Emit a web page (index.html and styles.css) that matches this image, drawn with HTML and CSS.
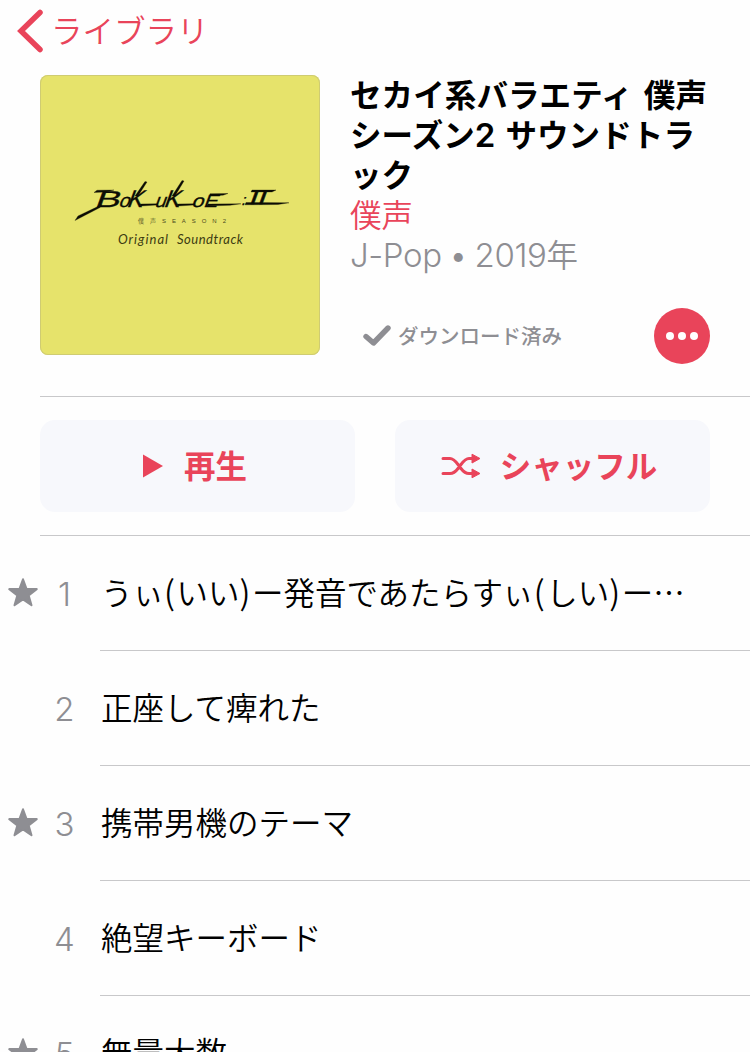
FILE: index.html
```html
<!DOCTYPE html>
<html lang="ja">
<head>
    <meta charset="UTF-8">
    <meta name="viewport" content="width=device-width, initial-scale=1.0">
    <title>ライブラリ</title>
    <link rel="stylesheet" href="styles.css">
</head>
<body>
    <header class="navbar">
        <a href="#" class="back">
            <svg class="back-icon" width="26" height="44" viewBox="0 0 26 44">
                <path d="M23 3.500 4 22 23 40.500" fill="none" stroke="currentColor" stroke-width="5.500" stroke-linecap="round" stroke-linejoin="miter"/>
            </svg>
            <span>ライブラリ</span>
        </a>
    </header>

    <section class="album">
        <div class="cover">
            <svg width="280" height="280" viewBox="0 0 280 280">
                <!-- brush logo -->
                <g class="logo">
                    <text transform="translate(54 132) skewX(-20)" font-size="23" textLength="25" lengthAdjust="spacingAndGlyphs">B</text>
                    <text transform="translate(78 132) skewX(-20)" font-size="19" textLength="11" lengthAdjust="spacingAndGlyphs">o</text>
                    <text transform="translate(86 132) skewX(-20)" font-size="24" textLength="16" lengthAdjust="spacingAndGlyphs">K</text>
                    <text transform="translate(114 131.500) skewX(-20)" font-size="19" textLength="11" lengthAdjust="spacingAndGlyphs">u</text>
                    <text transform="translate(123 132) skewX(-20)" font-size="24" textLength="16" lengthAdjust="spacingAndGlyphs">K</text>
                    <text transform="translate(151 132) skewX(-20)" font-size="18" textLength="12" lengthAdjust="spacingAndGlyphs">o</text>
                    <text transform="translate(163 131.500) skewX(-20)" font-size="18" textLength="14" lengthAdjust="spacingAndGlyphs">E</text>
                    <text transform="translate(201 129.500) skewX(-16)" font-size="15">:</text>
                    <text transform="translate(208 129) skewX(-20)" font-size="18" textLength="17" lengthAdjust="spacingAndGlyphs">II</text>
                    <!-- strokes running out of the letters -->
                    <path d="M35 145.500 38 141 62 129.500 60 132.500z"/>
                    <path d="M54 117.500 57 115.200 74 115 66 117z"/>
                    <path d="M95 121 105 106.500 107 107 98 121z"/>
                    <path d="M132 121 142 105.500 144 106 135 121z"/>
                    <path d="M100 129 118 128.700 117 130 101 131z"/>
                    <path d="M137 129 155 128.700 154 130 138 131z"/>
                    <path d="M170 118.700 188 118.500 183 120.200 170 120.500z"/>
                    <path d="M168 129 201 128.800 190 130.300 167 131z"/>
                    <path d="M212 115 236 115 232 117 211 117z"/>
                    <path d="M206 127.500 249 127.800 238 129.500 205 129.800z"/>
                </g>
                <text class="logo-season" x="98" y="148" textLength="88">僕声SEASON2</text>
                <text class="logo-sub" x="78" y="169" textLength="50">Original</text>
                <text class="logo-sub" x="137" y="169" textLength="66">Soundtrack</text>
            </svg>
        </div>
        <div class="info">
            <h1 class="title">セカイ系バラエティ<span class="space"> </span>僕声<br>シーズン<span class="latin">2 </span>サウンドトラ<br>ック</h1>
            <a href="#" class="artist">僕声</a>
            <p class="meta"><span class="latin">J-Pop • 2019</span>年</p>
            <div class="status">
                <svg class="check" width="28" height="22" viewBox="0 0 28 22">
                    <path d="M3 11.500 10.500 18 25 3" fill="none" stroke="currentColor" stroke-width="5.400" stroke-linecap="round" stroke-linejoin="round"/>
                </svg>
                <span class="status-text">ダウンロード済み</span>
                <button class="more" aria-label="その他">
                    <svg width="56" height="56" viewBox="0 0 56 56">
                        <circle cx="16" cy="28" r="4"/>
                        <circle cx="28" cy="28" r="4"/>
                        <circle cx="40" cy="28" r="4"/>
                    </svg>
                </button>
            </div>
        </div>
    </section>

    <section class="actions">
        <button class="action play">
            <svg width="20" height="24" viewBox="0 0 20 24">
                <path d="M0 .5 20 12 0 23.500z" fill="currentColor"/>
            </svg>
            <span>再生</span>
        </button>
        <button class="action shuffle">
            <svg width="40" height="28" viewBox="0 0 40 28">
                <path d="M2 6.500h7c3 0 5 2 8 6l3 4c3 4 5 5 8 5h4M2 21.500h7c3 0 5-1 8-5l3-4c3-4 5-6 8-6h4" fill="none" stroke="currentColor" stroke-width="3" stroke-linecap="round"/>
                <path d="M31 2.200l8 4.300-8 4.500zM31 17l8 4.500-8 4.300z" fill="currentColor" stroke="currentColor" stroke-linejoin="round"/>
            </svg>
            <span>シャッフル</span>
        </button>
    </section>

    <svg class="defs" width="0" height="0">
        <symbol id="star" viewBox="0 0 30 29">
            <path d="M15 1.300 18.500 10.800 28.700 11.100 20.700 17.400 23.500 27.200 15 21.500 6.500 27.200 9.300 17.400 1.300 11.100 11.500 10.800z" fill="currentColor" stroke="currentColor" stroke-width="2" stroke-linejoin="round"/>
        </symbol>
    </svg>

    <ol class="tracks">
        <li class="track">
            <svg class="star"><use href="#star"/></svg>
            <span class="number">1</span>
            <span class="name">うぃ<span class="paren">(</span>いい<span class="paren">)</span>ー発音であたらすぃ<span class="paren">(</span>しい<span class="paren">)</span>ー…</span>
        </li>
        <li class="track">
            <span class="star"></span>
            <span class="number">2</span>
            <span class="name">正座して痺れた</span>
        </li>
        <li class="track">
            <svg class="star"><use href="#star"/></svg>
            <span class="number">3</span>
            <span class="name">携帯男機のテーマ</span>
        </li>
        <li class="track">
            <span class="star"></span>
            <span class="number">4</span>
            <span class="name">絶望キーボード</span>
        </li>
        <li class="track">
            <svg class="star"><use href="#star"/></svg>
            <span class="number">5</span>
            <span class="name">無量大数</span>
        </li>
    </ol>
</body>
</html>
```
FILE: styles.css
```css
* {
    box-sizing: border-box;
}
body {
    margin: 0;
    height: 1052px;
    overflow: hidden;
    background: #fefefe;
    color: #000;
    font-family: "Noto Sans CJK JP", sans-serif;
    font-size: 31.5px;
    font-weight: 350;
}
a {
    color: #e9445a;
    text-decoration: none;
}
svg {
    display: block;
    flex: none;
}
.latin,
.number {
    font-family: Inter, "Noto Sans CJK JP", sans-serif;
    font-size: 33px;
    line-height: 1;
}
.navbar {
    height: 75px;
    padding: 9px 0 0 17px;
}
.back {
    display: flex;
    gap: 8px;
    line-height: 40px;
}
.album {
    display: flex;
    gap: 30px;
    height: 322px;
    margin-left: 40px;
    padding-right: 40px;
    border-bottom: 1px solid #c8c8ca;
}
.cover {
    width: 280px;
    height: 280px;
    background: #e6e36b;
    border-radius: 8px;
    box-shadow: inset 0 0 0 1px #cfcc72;
    overflow: hidden;
}
.logo {
    font-family: "Liberation Sans", sans-serif;
    fill: #0c0c04;
    stroke: #0c0c04;
    stroke-width: .3;
}
.logo-season {
    font-family: "Liberation Sans", "Noto Sans CJK JP", sans-serif;
    font-size: 6px;
    fill: #4b4a20;
}
.logo-sub {
    font-family: Lato, sans-serif;
    font-size: 13px;
    font-style: italic;
    font-weight: 400;
    fill: #3c3b12;
}
.info {
    flex: 1;
    display: flex;
    flex-direction: column;
    margin-top: -2px;
    line-height: 40px;
    white-space: nowrap;
}
.title {
    margin: 0;
    font-size: inherit;
    font-weight: 700;
    letter-spacing: .1px;
}
.title .latin {
    font-weight: 600;
    word-spacing: 1.5px;
}
.space {
    line-height: 1;
    word-spacing: 4px;
}
.artist {
    height: 40px;
}
.meta {
    height: 40px;
    margin: 0;
    color: #8e8e93;
}
.meta .latin {
    font-weight: 350;
    letter-spacing: -.4px;
    word-spacing: -1.5px;
}
.status {
    display: flex;
    align-items: center;
    height: 56px;
    margin-top: 35px;
    padding-left: 13px;
    color: #8e8e93;
}
.status-text {
    margin-left: 7px;
    padding-bottom: 2px;
    font-size: 20.5px;
    font-weight: 500;
}
.more {
    width: 56px;
    height: 56px;
    margin-left: auto;
    margin-right: 0;
    padding: 0;
    border: none;
    border-radius: 50%;
    background: #e9445a;
    fill: #fff;
}
.actions {
    display: flex;
    gap: 40px;
    height: 139px;
    margin-left: 40px;
    padding: 23px 40px 23px 0;
    border-bottom: 1px solid #c8c8ca;
}
.action {
    flex: 0 0 315px;
    display: flex;
    align-items: center;
    justify-content: center;
    gap: 21px;
    padding: 0 5px 0 0;
    border: none;
    border-radius: 15px;
    background: #f7f8fc;
    color: #e9445a;
    font: inherit;
    font-weight: 700;
}
.action span {
    padding-bottom: 4px;
}
.shuffle {
    gap: 19px;
    padding-right: 7px;
}
.defs {
    position: absolute;
}
.tracks {
    margin: 0;
    padding: 0;
    list-style: none;
}
.track {
    display: flex;
    align-items: center;
    height: 115px;
    padding-left: 8px;
}
.star {
    width: 30px;
    height: 29px;
    margin-bottom: 3px;
    color: #8e8e93;
}
.number {
    width: 62px;
    padding: 1px 9px 0 0;
    color: #8e8e93;
    font-weight: 350;
    text-align: center;
}
.name {
    flex: 1;
    height: 115px;
    padding-left: 1px;
    line-height: 110px;
    border-bottom: 1px solid #c8c8ca;
    white-space: nowrap;
}
.paren {
    font-size: 33px;
    line-height: 1;
    letter-spacing: 1.5px;
}
```
